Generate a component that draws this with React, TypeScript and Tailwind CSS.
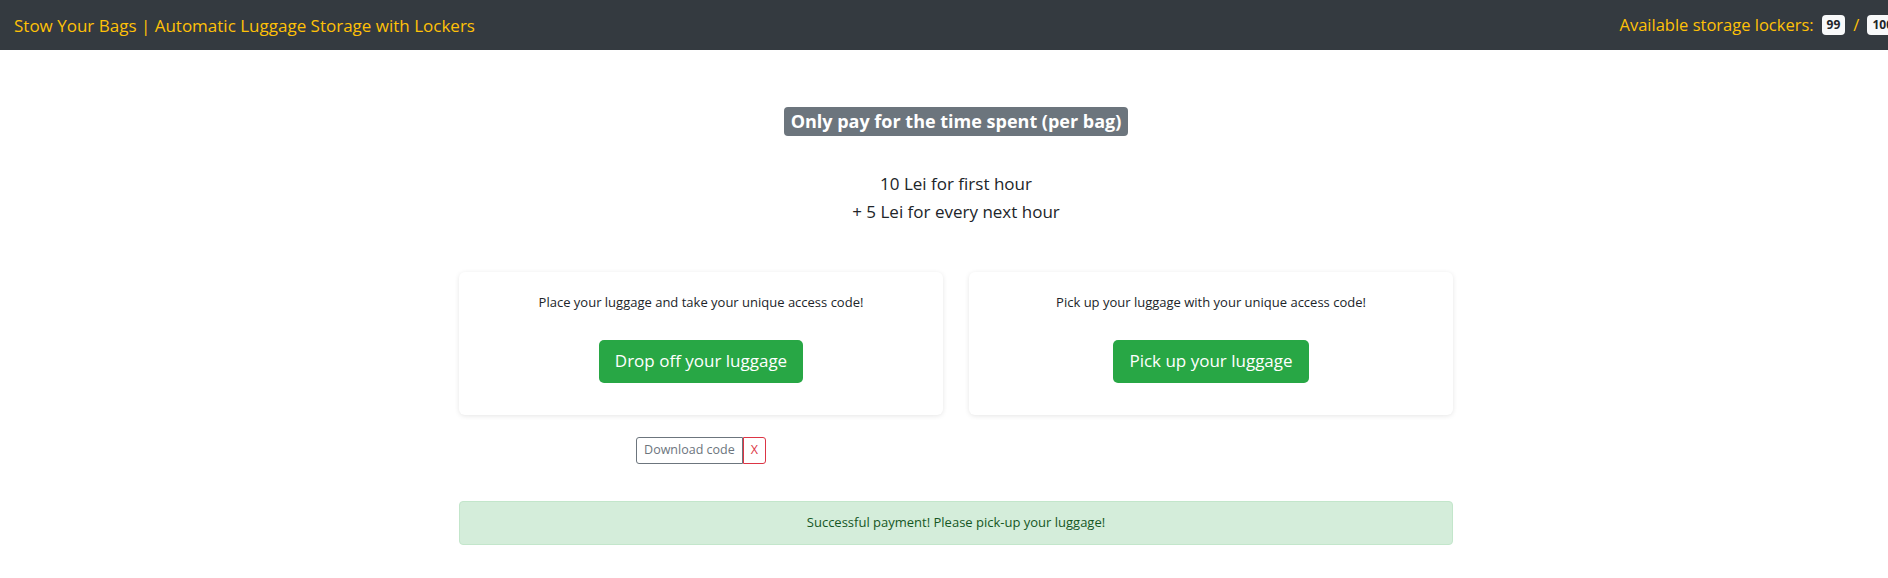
import React from "react";

const font = { fontFamily: '"Segoe UI", "Open Sans", "Noto Sans", sans-serif' };

function Navbar() {
    return (
        <nav className="h-[50px] bg-[#343a40] flex items-center justify-between px-[14px]">
            <span className="text-[17px] text-[#ffc107] leading-none">
                Stow Your Bags | Automatic Luggage Storage with Lockers
            </span>
            <div className="flex items-center gap-[8px] text-[16.5px] text-[#ffc107]">
                <span>Available storage lockers:</span>
                <span className="bg-[#f8f9fa] text-[#212529] text-[12px] font-bold px-[5px] py-[4px] rounded-[4px] leading-none">
                    99
                </span>
                <span>/</span>
                <span className="bg-[#f8f9fa] text-[#212529] text-[12px] font-bold px-[5px] py-[4px] rounded-[4px] leading-none">
                    100
                </span>
            </div>
        </nav>
    );
}

function ActionCard({ text, label }: { text: string; label: string }) {
    return (
        <div className="flex-1 h-[143px] bg-white rounded-[6px] shadow-[0_1px_5px_rgba(0,0,0,0.1)] flex flex-col items-center pt-[21px]">
            <p className="text-[13px] text-[#212529]">{text}</p>
            <button className="mt-[27px] h-[43px] px-[16px] bg-[#28a745] text-white text-[17px] rounded-[5px]">
                {label}
            </button>
        </div>
    );
}

export default function App() {
    return (
        <div className="w-full overflow-hidden bg-white" style={font}>
            <div className="w-[1912px]">
                <Navbar />
                <div className="w-[994px] mx-auto flex flex-col items-center">
                    <span className="mt-[57px] h-[29px] px-[7px] bg-[#6c757d] text-white text-[18px] font-bold rounded-[4px] flex items-center">
                        Only pay for the time spent (per bag)
                    </span>
                    <div className="mt-[34px] text-[17px] text-[#212529] leading-[28px] text-center">
                        <p>10 Lei for first hour</p>
                        <p>+ 5 Lei for every next hour</p>
                    </div>
                    <div className="mt-[46px] w-full flex gap-[26px]">
                        <ActionCard text="Place your luggage and take your unique access code!" label="Drop off your luggage" />
                        <ActionCard text="Pick up your luggage with your unique access code!" label="Pick up your luggage" />
                    </div>
                    <div className="w-full flex gap-[26px] mt-[22px]">
                        <div className="flex-1 flex justify-center">
                            <div className="flex h-[27px] text-[12.5px]">
                                <button className="px-[7px] border border-[#6c757d] text-[#6c757d] rounded-l-[3px]">
                                    Download code
                                </button>
                                <button className="px-[7px] border border-[#dc3545] text-[#dc3545] rounded-r-[3px]">
                                    X
                                </button>
                            </div>
                        </div>
                        <div className="flex-1" />
                    </div>
                    <div className="mt-[37px] w-full h-[44px] bg-[#d4edda] border border-[#c3e6cb] rounded-[4px] text-[#155724] text-[13px] flex items-center justify-center">
                        Successful payment! Please pick-up your luggage!
                    </div>
                </div>
            </div>
        </div>
    );
}
